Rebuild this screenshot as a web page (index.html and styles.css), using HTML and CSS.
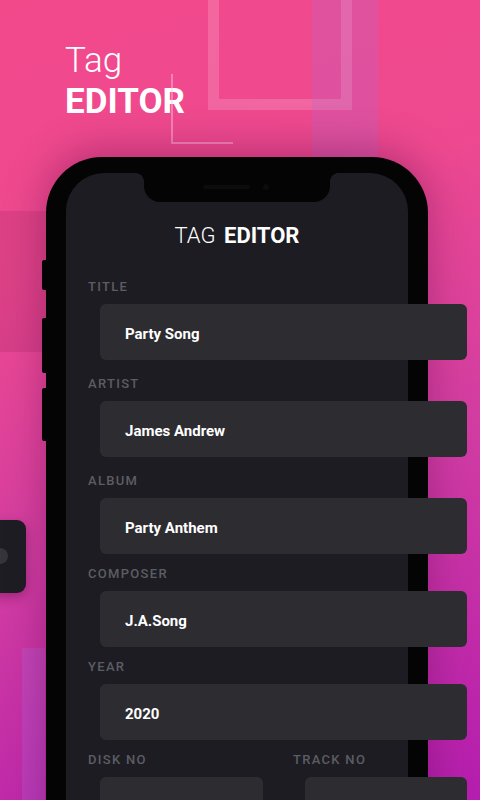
FILE: index.html
```html
<!DOCTYPE html>
<html lang="en">
<head>
  <meta charset="UTF-8" />
  <title>Tag Editor</title>
  <link rel="stylesheet" href="styles.css">
</head>
<body>
  <div class="page">
    <!-- background decoration -->
    <div class="deco deco-square"></div>
    <div class="deco deco-band"></div>
    <div class="deco deco-corner"></div>
    <div class="deco deco-shade"></div>
    <div class="deco deco-strip"></div>
    <div class="deco side-card"><span class="side-dot"></span></div>

    <h1 class="hero">
      <span class="hero-light">Tag</span>
      <span class="hero-bold">EDITOR</span>
    </h1>

    <div class="phone">
      <span class="phone-btn btn-a"></span>
      <span class="phone-btn btn-b"></span>
      <span class="phone-btn btn-c"></span>

      <div class="screen">
        <div class="notch">
          <span class="speaker"></span>
          <span class="camera"></span>
        </div>

        <h2 class="screen-title"><span class="light">TAG</span> <span class="bold">EDITOR</span></h2>

        <div class="form">
          <div class="group group-wide">
            <div class="label">TITLE</div>
            <div class="field">Party Song</div>
          </div>
          <div class="group group-wide">
            <div class="label">ARTIST</div>
            <div class="field">James Andrew</div>
          </div>
          <div class="group">
            <div class="label">ALBUM</div>
            <div class="field">Party Anthem</div>
          </div>
          <div class="group">
            <div class="label">COMPOSER</div>
            <div class="field">J.A.Song</div>
          </div>
          <div class="group">
            <div class="label">YEAR</div>
            <div class="field">2020</div>
          </div>
          <div class="group-row">
            <div class="group">
              <div class="label">DISK NO</div>
              <div class="field"></div>
            </div>
            <div class="group">
              <div class="label">TRACK NO</div>
              <div class="field"></div>
            </div>
          </div>
        </div>
      </div>
    </div>
  </div>
</body>
</html>
```

FILE: styles.css
```css
* {
  box-sizing: border-box;
}

body {
  margin: 0;
  font-family: Roboto, 'Liberation Sans', sans-serif;
}

.page {
  position: relative;
  width: 480px;
  height: 800px;
  overflow: hidden;
  padding-top: 40px;
  background: linear-gradient(162deg, #f2498b 0%, #ee4990 30%, #d23da2 60%, #b41dae 100%);
}

/* Decorations */
.deco {
  position: absolute;
}

.deco-square {
  left: 208px;
  top: -40px;
  width: 144px;
  height: 150px;
  border: 11px solid rgba(255, 255, 255, 0.16);
}

.deco-band {
  left: 312px;
  top: 0;
  width: 66px;
  height: 170px;
  background: rgba(170, 110, 220, 0.22);
}

.deco-corner {
  left: 171px;
  top: 74px;
  width: 62px;
  height: 70px;
  border-left: 2px solid rgba(255, 200, 230, 0.45);
  border-bottom: 2px solid rgba(255, 200, 230, 0.45);
}

.deco-shade {
  left: 0;
  top: 211px;
  width: 46px;
  height: 141px;
  background: rgba(70, 0, 50, 0.1);
}

.deco-strip {
  left: 22px;
  top: 648px;
  width: 23px;
  height: 152px;
  background: rgba(170, 110, 230, 0.25);
}

.side-card {
  left: -30px;
  top: 520px;
  width: 56px;
  height: 73px;
  border-radius: 9px;
  background: #1d1d23;
  box-shadow: 0 4px 12px rgba(60, 0, 50, 0.35);
}

.side-dot {
  position: absolute;
  left: 22px;
  top: 28px;
  width: 16px;
  height: 16px;
  border-radius: 50%;
  background: #35353b;
}

/* Hero heading */
.hero {
  margin: 0;
  padding-left: 65px;
  font-size: 35px;
  line-height: 41px;
  color: #fff;
  font-weight: 400;
}

.hero span {
  display: block;
}

.hero-light {
  font-weight: 300;
}

.hero-bold {
  font-weight: 700;
}

/* Phone */
.phone {
  position: relative;
  width: 382px;
  height: 700px;
  margin: 35px 0 0 46px;
  padding: 16px 20px 0;
  background: #040405;
  border-radius: 56px 56px 0 0;
  box-shadow: 0 -6px 40px rgba(70, 0, 60, 0.35);
}

.phone-btn {
  position: absolute;
  left: -4px;
  width: 5px;
  background: #040405;
  border-radius: 2px 0 0 2px;
}

.btn-a { top: 103px; height: 30px; }
.btn-b { top: 161px; height: 55px; }
.btn-c { top: 231px; height: 53px; }

.screen {
  position: relative;
  height: 100%;
  padding-top: 50px;
  background: #1c1c22;
  border-radius: 38px 38px 0 0;
}

.notch {
  position: absolute;
  left: 78px;
  top: 0;
  width: 186px;
  height: 29px;
  background: #040405;
  border-radius: 0 0 16px 16px;
}

.notch::before,
.notch::after {
  content: '';
  position: absolute;
  top: 0;
  width: 8px;
  height: 8px;
}

.notch::before {
  left: -8px;
  background: radial-gradient(circle at 0 100%, transparent 7.5px, #040405 8px);
}

.notch::after {
  right: -8px;
  background: radial-gradient(circle at 100% 100%, transparent 7.5px, #040405 8px);
}

.speaker {
  position: absolute;
  left: 59px;
  top: 12px;
  width: 47px;
  height: 4px;
  border-radius: 2px;
  background: #0c0c0e;
}

.camera {
  position: absolute;
  left: 119px;
  top: 11px;
  width: 6px;
  height: 6px;
  border-radius: 50%;
  background: #0c0c0e;
}

.screen-title {
  margin: 0;
  text-align: center;
  font-size: 22px;
  line-height: 26px;
  color: #fff;
  font-weight: 400;
  word-spacing: 3px;
}

.screen-title .light {
  font-weight: 300;
}

.screen-title .bold {
  font-weight: 700;
}

/* Form */
.form {
  width: 379px;
  margin: 30px 0 0 22px;
}

.group {
  margin-bottom: 12px;
}

.group-wide {
  margin-bottom: 16px;
}

.label {
  font-size: 13px;
  line-height: 16px;
  letter-spacing: 1.3px;
  font-weight: 500;
  color: #5c5c64;
  margin-bottom: 9px;
}

.field {
  margin-left: 12px;
  height: 56px;
  padding: 2px 0 0 25px;
  background: #2c2c31;
  border-radius: 6px;
  font-size: 15px;
  line-height: 56px;
  font-weight: 700;
  color: #fff;
}

.group-row {
  display: grid;
  grid-template-columns: 175px 174px;
  column-gap: 30px;
}
```
